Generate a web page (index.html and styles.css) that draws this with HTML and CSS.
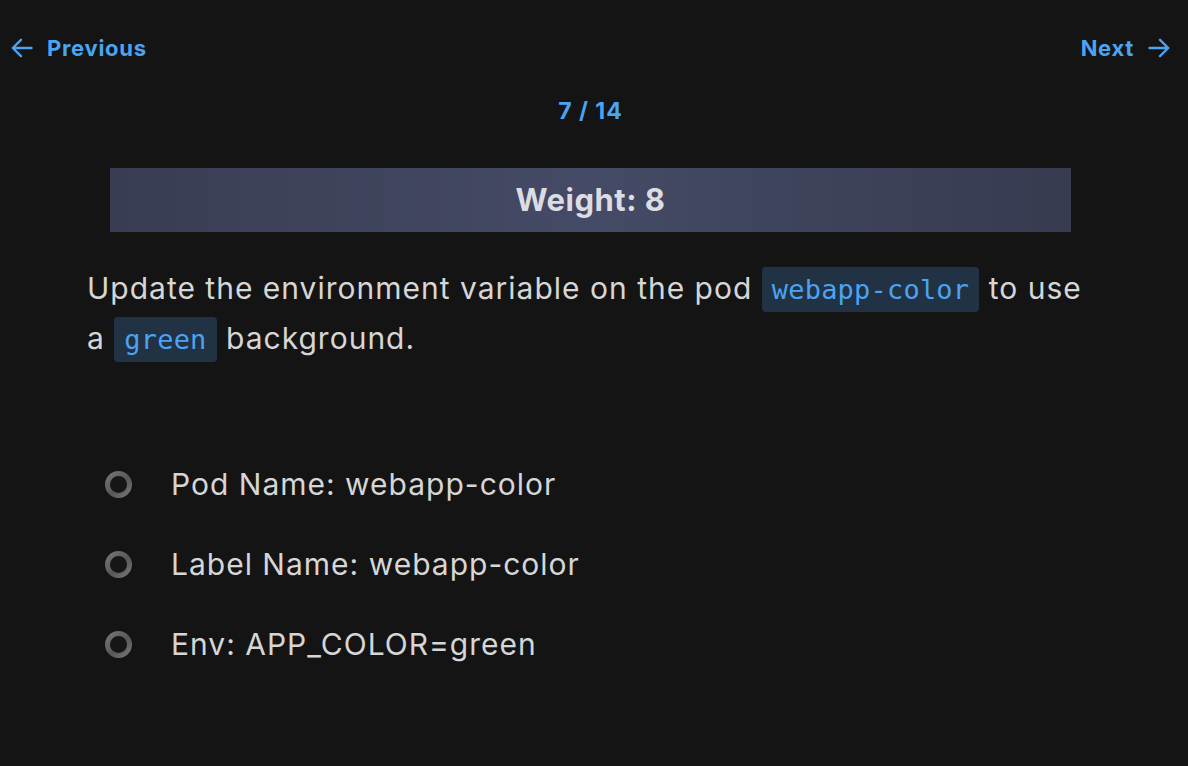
FILE: index.html
```html
<!DOCTYPE html>
<html lang="en">
<head>
<meta charset="utf-8">
<title>Question 7</title>
<link rel="stylesheet" href="styles.css">
</head>
<body>
<div class="page">
  <nav class="nav">
    <a class="nav-link" href="#">
      <svg class="arrow" viewBox="0 0 22 20" width="22" height="20" aria-hidden="true"><path d="M20.5 10H1.8M10 1.8L1.8 10L10 18.2" fill="none" stroke="currentColor" stroke-width="2.4" stroke-linecap="round" stroke-linejoin="round"/></svg>
      <span>Previous</span>
    </a>
    <a class="nav-link" href="#">
      <span>Next</span>
      <svg class="arrow" viewBox="0 0 22 20" width="22" height="20" aria-hidden="true"><path d="M1.5 10H20.2M12 1.8L20.2 10L12 18.2" fill="none" stroke="currentColor" stroke-width="2.4" stroke-linecap="round" stroke-linejoin="round"/></svg>
    </a>
  </nav>
  <div class="head">
    <div class="counter">7 / 14</div>
    <div class="weight">Weight: 8</div>
  </div>
  <p class="question">Update the environment variable on the pod <code>webapp-color</code> to use a <code>green</code> background.</p>
  <ul class="options">
    <li class="option"><span class="radio"></span><span>Pod Name: webapp-color</span></li>
    <li class="option"><span class="radio"></span><span>Label Name: webapp-color</span></li>
    <li class="option"><span class="radio"></span><span>Env: APP_COLOR=green</span></li>
  </ul>
</div>
</body>
</html>
```
FILE: styles.css
```css
html, body {
  margin: 0;
  padding: 0;
  background: #141414;
}
body {
  font-family: Inter, "Noto Sans", sans-serif;
  color: #d4d4d4;
  height: 766px;
  overflow: hidden;
}
.nav {
  display: flex;
  justify-content: space-between;
  align-items: center;
  padding: 32px 18px 0 11px;
  height: 32px;
}
.nav-link {
  display: flex;
  align-items: center;
  gap: 14px;
  color: #4ba3f1;
  text-decoration: none;
  font-weight: 700;
  font-size: 22px;
  letter-spacing: 0.7px;
  line-height: 32px;
}
.arrow {
  display: block;
}
.head {
  width: 961px;
  margin-left: 110px;
}
.counter {
  margin-top: 35px;
  text-align: center;
  color: #4ba3f1;
  font-weight: 700;
  font-size: 23px;
  letter-spacing: 1px;
  line-height: 24px;
}
.weight {
  margin-top: 45px;
  height: 64px;
  line-height: 64px;
  text-align: center;
  font-weight: 700;
  font-size: 31px;
  letter-spacing: 0.5px;
  color: #dcdde3;
  background: linear-gradient(90deg, #393d53 0%, #454a66 50%, #363b50 100%);
}
.question {
  width: 1014px;
  margin: 31px auto 0;
  font-size: 30px;
  letter-spacing: 1px;
  line-height: 50px;
  color: #d6d6d6;
}
.question code {
  font-family: "DejaVu Sans Mono", "Liberation Mono", monospace;
  font-size: 27px;
  letter-spacing: 0.2px;
  line-height: 1;
  color: #4ba3f1;
  background: #213244;
  border-radius: 4px;
  padding: 7px 10px;
}
.options {
  list-style: none;
  margin: 81px 0 0;
  padding: 0 0 0 105px;
}
.option {
  display: flex;
  align-items: center;
  gap: 39px;
  height: 80px;
  font-size: 30px;
  letter-spacing: 1px;
  color: #d6d6d6;
}
.radio {
  position: relative;
  width: 27px;
  height: 27px;
  border-radius: 50%;
  background: linear-gradient(135deg, #7a7a7a 0%, #575757 55%, #7c7c7c 100%);
  flex: none;
}
.radio::after {
  content: "";
  position: absolute;
  inset: 5px;
  border-radius: 50%;
  background: #161616;
}
```
